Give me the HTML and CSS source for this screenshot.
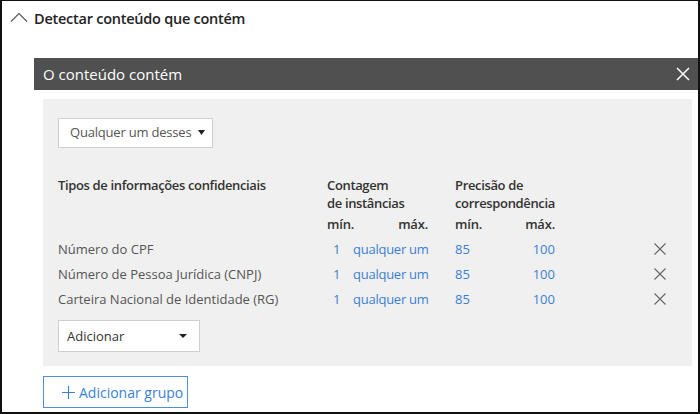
FILE: index.html
```html
<!DOCTYPE html>
<html lang="pt">
<head>
<meta charset="utf-8">
<link rel="stylesheet" href="styles.css">
</head>
<body>
<div class="frame">
  <div class="section-title">
    <svg class="chevron" width="18" height="10" viewBox="0 0 18 10"><polyline points="1,9.5 9,1.5 17,9.5" fill="none" stroke="#555" stroke-width="1.1"/></svg>
    <span>Detectar conteúdo que contém</span>
  </div>
  <div class="content">
    <div class="dialog-header">
      <span>O conteúdo contém</span>
      <svg class="close" width="14" height="14" viewBox="0 0 14 14"><path d="M1 1L13 13M13 1L1 13" stroke="#fff" stroke-width="1.5"/></svg>
    </div>
    <div class="panel">
      <div class="select select-any">
        <span>Qualquer um desses</span>
        <svg width="7" height="5" viewBox="0 0 7 5"><path d="M0 0H7L3.5 5Z" fill="#222"/></svg>
      </div>
      <div class="grid">
        <div class="th name">Tipos de informações confidenciais</div>
        <div class="th span2 c2">Contagem<br>de instâncias</div>
        <div class="th span2 c5">Precisão de<br>correspondência</div>

        <div class="sub c2">mín.</div>
        <div class="sub c3 right">máx.</div>
        <div class="sub c5">mín.</div>
        <div class="sub c6 right">máx.</div>

        <div class="cell name-cell">Número do CPF</div>
        <div class="cell link c2 one">1</div>
        <div class="cell link c3">qualquer um</div>
        <div class="cell link c5">85</div>
        <div class="cell link c6 right">100</div>
        <div class="cell c8"><svg width="12" height="12" viewBox="0 0 12 12"><path d="M0.5 0.5L11.5 11.5M11.5 0.5L0.5 11.5" stroke="#666" stroke-width="1.1"/></svg></div>

        <div class="cell name-cell">Número de Pessoa Jurídica (CNPJ)</div>
        <div class="cell link c2 one">1</div>
        <div class="cell link c3">qualquer um</div>
        <div class="cell link c5">85</div>
        <div class="cell link c6 right">100</div>
        <div class="cell c8"><svg width="12" height="12" viewBox="0 0 12 12"><path d="M0.5 0.5L11.5 11.5M11.5 0.5L0.5 11.5" stroke="#666" stroke-width="1.1"/></svg></div>

        <div class="cell name-cell">Carteira Nacional de Identidade (RG)</div>
        <div class="cell link c2 one">1</div>
        <div class="cell link c3">qualquer um</div>
        <div class="cell link c5">85</div>
        <div class="cell link c6 right">100</div>
        <div class="cell c8"><svg width="12" height="12" viewBox="0 0 12 12"><path d="M0.5 0.5L11.5 11.5M11.5 0.5L0.5 11.5" stroke="#666" stroke-width="1.1"/></svg></div>
      </div>
      <div class="select select-add">
        <span>Adicionar</span>
        <svg width="8" height="4" viewBox="0 0 8 4"><path d="M0 0H8L4 4Z" fill="#222"/></svg>
      </div>
    </div>
    <button class="add-group">
      <svg width="13" height="13" viewBox="0 0 13 13"><path d="M6.5 0V13M0 6.5H13" stroke="#3a7fd5" stroke-width="1.1"/></svg>
      <span>Adicionar grupo</span>
    </button>
  </div>
</div>
</body>
</html>
```
FILE: styles.css
```css
* { box-sizing: border-box; }
html, body { margin: 0; padding: 0; background: #fff; }
body { font-family: "Open Sans", "Noto Sans", sans-serif; color: #333; }

.frame {
  width: 700px;
  height: 414px;
  border: 2px solid #111;
  border-top-width: 1px;
  overflow: hidden;
}

.section-title {
  display: flex;
  align-items: center;
  height: 34px;
  padding-left: 8px;
  gap: 6px;
  font-size: 14.5px;
  letter-spacing: -0.25px;
  font-weight: 600;
  color: #222;
}
.chevron { margin-top: -3px; }

.content { padding-left: 32px; padding-top: 23px; }

.dialog-header {
  height: 32px;
  background: #505050;
  color: #fff;
  display: flex;
  align-items: center;
  justify-content: space-between;
  padding-left: 9px;
  padding-right: 8px;
  font-size: 15px;
}

.panel {
  background: #f0f0f0;
  margin-top: 9px;
  margin-left: 9px;
  margin-right: 6px;
  padding: 19px 26px 14px 15px;
}

.select {
  background: #fff;
  border: 1px solid #cfcfcf;
  display: flex;
  align-items: center;
  justify-content: space-between;
  font-size: 13px;
  color: #333;
}
.select-any { width: 155px; height: 30px; padding: 0 7px 2px 11px; color: #555; letter-spacing: -0.2px; }
.select-add { width: 142px; height: 32px; padding: 0 12px 0 8px; margin-top: 9px; }

.grid {
  display: grid;
  grid-template-columns: 269px 26px 75px 27px 40px 60px 1fr 12px;
  grid-template-rows: 36px 24px 25px 25px 25px;
  margin-top: 28px;
  font-size: 13px;
}
.th { font-weight: 600; line-height: 18px; color: #333; letter-spacing: -0.35px; white-space: nowrap; }
.th.name { grid-column: 1; }
.span2.c2 { grid-column: 2 / span 2; }
.span2.c5 { grid-column: 5 / span 2; }
.sub { font-weight: 600; line-height: 18px; padding-top: 3px; color: #333; letter-spacing: -0.2px; }
.c2 { grid-column: 2; }
.c3 { grid-column: 3; }
.c5 { grid-column: 5; }
.c6 { grid-column: 6; }
.c8 { grid-column: 8; }
.right { text-align: right; }
.name-cell { grid-column: 1; color: #555; }
.cell { display: flex; align-items: center; height: 25px; white-space: nowrap; }
.cell.right { justify-content: flex-end; }
.c3.link { letter-spacing: -0.25px; }
.link { color: #3a7fd5; }
.one { padding-left: 6px; }

.add-group {
  margin-top: 10px;
  margin-left: 9px;
  width: 145px;
  height: 32px;
  background: #fff;
  border: 1px solid #4a8fe0;
  display: flex;
  align-items: center;
  gap: 4px;
  padding: 0 0 0 18px;
  font-family: inherit;
  font-size: 14px;
  color: #3a7fd5;
}
```
